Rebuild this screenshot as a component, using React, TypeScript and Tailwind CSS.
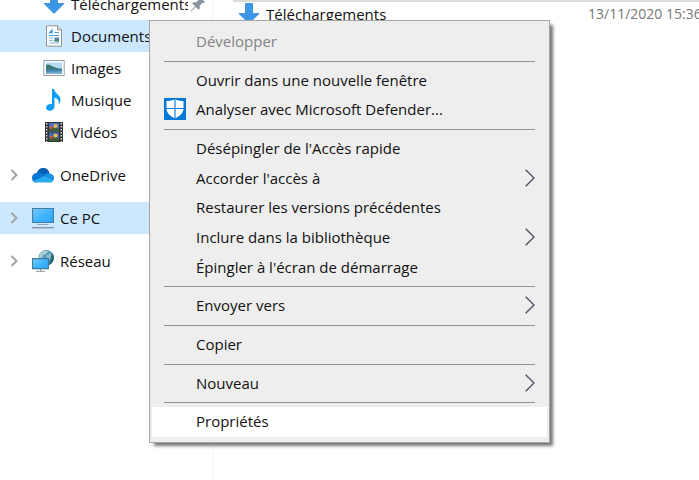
import type { ReactNode } from 'react';

const ArrowDownIcon = () => (
  <svg viewBox="0 0 22 22" className="size-[22px] shrink-0" aria-hidden="true">
    <path d="M7.500.5h7v10h6.500L11 20.500 1 10.500h6.500z" fill="#3b97e6" stroke="#2f86d4" strokeWidth=".8" />
  </svg>
);

const DocumentIcon = () => (
  <svg viewBox="0 0 22 22" className="size-[22px] shrink-0" aria-hidden="true">
    <path d="M3.500.8h11l4 4v16.400h-15z" fill="#fbfbfb" stroke="#8d9296" />
    <path d="M14.500.8v4h4" fill="#d8dcdf" stroke="#8d9296" />
    <path d="M6 8.500 9 5v3.500M7 7.500h2" fill="none" stroke="#2c8fd6" strokeWidth="1.100" />
    <path d="M11.500 7.500h4.500M6 10.500h10" stroke="#3f9ad8" strokeWidth=".9" />
    <path d="M6 13h4M6 15.500h4M6 18h10" stroke="#78afd4" strokeWidth=".9" />
    <path d="M11.500 12.500h4.500v4h-4.500z" fill="#4d7fae" />
    <path d="M11.500 15h4.500v1.500h-4.500z" fill="#4b8b68" />
  </svg>
);

const ImageIcon = () => (
  <svg viewBox="0 0 22 22" className="size-[22px] shrink-0" aria-hidden="true">
    <path d="M.8 3.500h20.400v15H.8z" fill="#fff" stroke="#999da0" />
    <path d="M3 5.500h16v11H3z" fill="#b5dcf5" />
    <path d="M3 8c3-1.500 5 1 8 2s5 1.500 8 1.500v2H3z" fill="#3b7a72" />
    <path d="M3 12.500h16v4H3z" fill="#4383b4" />
    <path d="M3 15c6-1 10 0 16-1v2.500H3z" fill="#6fa9cc" />
  </svg>
);

const MusicIcon = () => (
  <svg viewBox="0 0 22 22" className="size-[22px] shrink-0" aria-hidden="true">
    <path d="M9 0h2c.3 4.500 6.500 5.500 6.500 10.500 0 2-.8 4-1.700 5.300.5-4-.8-6.200-4.300-7.300v9c0 2.500-2.200 4.300-4.800 4.300-2.200 0-3.700-1.200-3.700-3 0-2.200 2.200-3.800 4.700-3.800.5 0 .9 0 1.300.2z" fill="#0c9df5" />
  </svg>
);

const VideoIcon = () => (
  <svg viewBox="0 0 22 22" className="size-[22px] shrink-0" aria-hidden="true">
    <path d="M2 1h18v20H2z" fill="#30353a" />
    <path d="M3.700 2v19M18.300 2v19" stroke="#dfe3e5" strokeWidth="1.400" strokeDasharray="1.500 1.500" />
    <path d="M6 2h10v8.500H6z" fill="#4a70c9" />
    <path d="M6 11.500h10V20H6z" fill="#3f66b4" />
    <path d="M6 8c3-2 5-1 10 0v2.500H6zM6 17.500c3-2 6-1 10 0V20H6z" fill="#3f5c35" />
    <circle cx="12.500" cy="5" r="2.100" fill="#e9bd3e" />
    <circle cx="12.500" cy="14.500" r="2.100" fill="#e9bd3e" />
    <circle cx="8.300" cy="6.500" r="1.500" fill="#d0523a" />
    <circle cx="8.300" cy="16" r="1.500" fill="#d0523a" />
  </svg>
);

const CloudIcon = () => (
  <svg viewBox="0 0 22 22" className="size-[22px] shrink-0" aria-hidden="true">
    <path d="M4.500 9.500C5.500 6 8 4 11 4c3.500 0 6 2 6.500 5.500L12 14z" fill="#0a5fb4" />
    <path d="M5 9c2-.8 4-.4 6 .8l5 3L4 18.500c-2.500 0-4-2-4-4.500 0-3 2-5 5-5z" fill="#0c78d4" />
    <path d="M12.500 11c1.500-1.500 3-2 5-1.500 3 .2 4.500 2 4.500 4.500 0 2.800-2 4.500-4.500 4.500z" fill="#1590df" />
    <path d="m1.500 17 10.800-5L21.500 16.500c-.8 1.300-2.200 2-4 2H4.500c-1.200 0-2.200-.5-3-1.500z" fill="#2aaaf0" />
  </svg>
);

const ComputerIcon = () => (
  <svg viewBox="0 0 22 22" className="size-[22px] shrink-0" aria-hidden="true">
    <defs>
      <linearGradient id="screen" x1="0" y1="0" x2="1" y2="1">
        <stop stopColor="#7bcbff" />
        <stop offset=".5" stopColor="#42b6ff" />
        <stop offset="1" stopColor="#2ba6f7" />
      </linearGradient>
    </defs>
    <path d="M.600 1.500h20.800v14H.6z" fill="url(#screen)" stroke="#447b9e" strokeWidth="1.100" />
    <path d="M5.500 17.500h11" stroke="#93a6b4" />
    <path d="M0 20.700h22" stroke="#8b9aa6" strokeWidth="1.500" />
  </svg>
);

const NetworkIcon = () => (
  <svg viewBox="0 0 22 22" className="size-[22px] shrink-0" aria-hidden="true">
    <circle cx="14.200" cy="7.800" r="7.700" fill="#5c9fba" />
    <path d="M8 3.500c3-3.500 6-3 8-2.500l-2 3-3 1-1 3-3 .5z" fill="#aacfd6" />
    <path d="m15 5 4-1 1.500 3-2.500 3-3-2z" fill="#8fc1cc" />
    <path d="M20 3c3 3 2.500 8-1 11l-3 1.500 2-5z" fill="#2b687f" />
    <path d="M.600 8.600h15.800v10H.6z" fill="url(#screen)" stroke="#3c7899" strokeWidth="1.100" />
    <path d="M8.500 19v2M4 21.300h9" stroke="#8395a0" />
  </svg>
);

const PinIcon = () => (
  <svg viewBox="0 0 16 16" className="size-4 shrink-0" aria-hidden="true">
    <path d="M10 1.500 15 6l-1.200 1-1.300-.2-2.800 3 .1 2.700-1.300 1.300L5.700 11 1 15.500.5 15 5 10.300 2.200 7.500 3.500 6.200l2.700.1L9.300 3.500 9 2.500z" fill="#8a959e" />
  </svg>
);

const ShieldIcon = () => (
  <svg viewBox="0 0 22 22" className="size-[22px]" aria-hidden="true">
    <path d="M0 0h22v22H0z" fill="#0078d7" />
    <path d="M11 1c2.500 1.500 5 2 8.500 2v7.500c0 4.500-3.500 7.500-8.500 10-5-2.500-8.500-5.500-8.500-10V3C6 3 8.500 2.500 11 1z" fill="#fff" />
    <path d="M11 1v20M2 10.500h18" stroke="#0078d7" strokeWidth="1.100" />
  </svg>
);

const SubmenuArrow = () => (
  <svg viewBox="0 0 10 18" className="mb-0.5 h-[18px] w-2.5" aria-hidden="true">
    <path d="m.700.700 8.300 8.300-8.300 8.300" fill="none" stroke="#4c4a60" strokeWidth="1.300" />
  </svg>
);

const Expander = () => (
  <svg viewBox="0 0 8 12" className="h-3 w-2" aria-hidden="true">
    <path d="m1.500 1 5 5-5 5" fill="none" stroke="#a3a3a3" strokeWidth="2" />
  </svg>
);

type Folder = { label: string; icon: ReactNode; selected?: boolean };

const folders: Folder[] = [
  { label: 'Documents', icon: <DocumentIcon />, selected: true },
  { label: 'Images', icon: <ImageIcon /> },
  { label: 'Musique', icon: <MusicIcon /> },
  { label: 'Vidéos', icon: <VideoIcon /> },
];

const places: Folder[] = [
  { label: 'OneDrive', icon: <CloudIcon /> },
  { label: 'Ce PC', icon: <ComputerIcon />, selected: true },
  { label: 'Réseau', icon: <NetworkIcon /> },
];

type Command = { label: string; icon?: ReactNode; submenu?: boolean; disabled?: boolean; active?: boolean };

const groups: Command[][] = [
  [{ label: 'Développer', disabled: true }],
  [{ label: 'Ouvrir dans une nouvelle fenêtre' }, { label: 'Analyser avec Microsoft Defender...', icon: <ShieldIcon /> }],
  [
    { label: "Désépingler de l'Accès rapide" },
    { label: "Accorder l'accès à", submenu: true },
    { label: 'Restaurer les versions précédentes' },
    { label: 'Inclure dans la bibliothèque', submenu: true },
    { label: "Épingler à l'écran de démarrage" },
  ],
  [{ label: 'Envoyer vers', submenu: true }],
  [{ label: 'Copier' }],
  [{ label: 'Nouveau', submenu: true }],
  [{ label: 'Propriétés', active: true }],
];

function Sidebar() {
  return (
    <nav className="-mt-3 w-[213px] shrink-0 border-r border-[#f3f3f3]">
      <button className="flex h-8 w-full items-center gap-1.5 pl-[43px]">
        <ArrowDownIcon />
        <span className="w-[117px] shrink-0 overflow-hidden text-left whitespace-nowrap">Téléchargements</span>
        <span className="-ml-1">
          <PinIcon />
        </span>
      </button>
      {folders.map((f) => (
        <button key={f.label} className={`flex h-8 w-full items-center gap-1.5 pl-[43px] ${f.selected ? 'bg-[#cce8ff]' : ''}`}>
          {f.icon}
          {f.label}
        </button>
      ))}
      <div className="mt-[11px] flex flex-col gap-[11px]">
        {places.map((p) => (
          <button key={p.label} className={`flex h-8 w-full items-center pl-2.5 ${p.selected ? 'bg-[#cce8ff]' : ''}`}>
            <Expander />
            <span className="mr-1.5 ml-3.5">{p.icon}</span>
            {p.label}
          </button>
        ))}
      </div>
    </nav>
  );
}

function ContextMenu() {
  return (
    <div
      role="menu"
      className="absolute top-5 left-[149px] flex h-[423px] w-[401px] flex-col border border-[#a5a5a5] bg-[#eee] px-0.5 pt-1.5 pb-[5px] shadow-[4px_4px_3px_-1px_#777]"
    >
      {groups.map((group, i) => (
        <div key={group[0].label} className="contents">
          {i > 0 && <hr className="mx-3 my-1 h-px shrink-0 border-0 bg-[#929292]" />}
          {group.map((c) => (
            <button
              key={c.label}
              role="menuitem"
              disabled={c.disabled}
              className={`flex min-h-0 flex-1 items-center px-3 text-left ${c.active ? 'bg-white' : ''} ${c.disabled ? 'text-[#838383]' : ''}`}
            >
              <span className="w-8 shrink-0 pb-0.5">{c.icon}</span>
              <span className="flex-1 pb-0.5 whitespace-nowrap">{c.label}</span>
              {c.submenu && <SubmenuArrow />}
            </button>
          ))}
        </div>
      ))}
    </div>
  );
}

export default function App() {
  return (
    <div className="relative flex h-screen overflow-hidden bg-white font-['Open_Sans','Noto_Sans',sans-serif] text-[15px] leading-5 text-[#111]">
      <Sidebar />
      <main className="min-w-0 flex-1 overflow-hidden pl-5">
        <div className="flex h-[26px] items-center border-t-2 border-[#dcdcdc] pl-[5px]">
          <ArrowDownIcon />
          <span className="ml-1.5 w-[322px] shrink-0">Téléchargements</span>
          <time className="text-sm whitespace-nowrap text-[#777]">13/11/2020 15:36</time>
        </div>
      </main>
      <ContextMenu />
    </div>
  );
}
